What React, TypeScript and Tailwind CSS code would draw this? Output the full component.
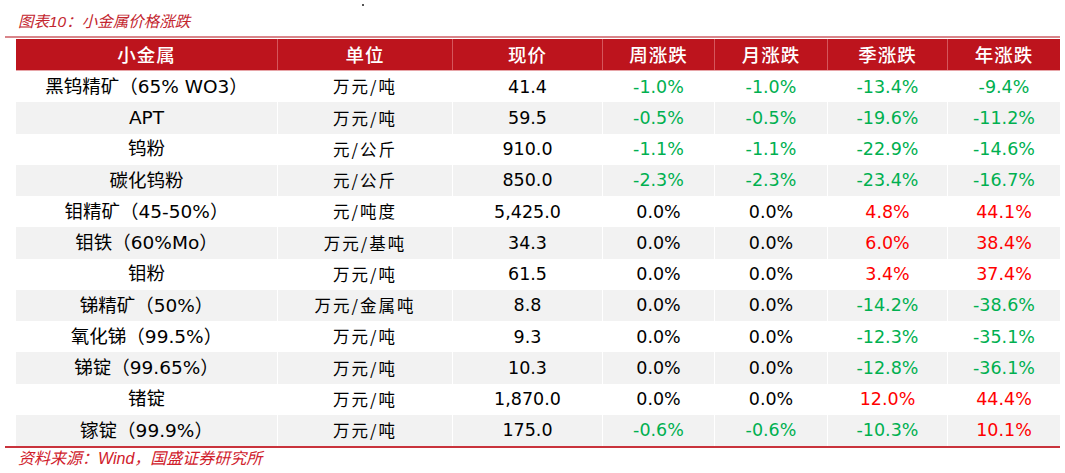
type Row = {
  name: string
  unit: string
  price: string
  week: string
  month: string
  quarter: string
  year: string
}

const rows: Row[] = [
  { name: "黑钨精矿（65% WO3）", unit: "万元/吨", price: "41.4", week: "-1.0%", month: "-1.0%", quarter: "-13.4%", year: "-9.4%" },
  { name: "APT", unit: "万元/吨", price: "59.5", week: "-0.5%", month: "-0.5%", quarter: "-19.6%", year: "-11.2%" },
  { name: "钨粉", unit: "元/公斤", price: "910.0", week: "-1.1%", month: "-1.1%", quarter: "-22.9%", year: "-14.6%" },
  { name: "碳化钨粉", unit: "元/公斤", price: "850.0", week: "-2.3%", month: "-2.3%", quarter: "-23.4%", year: "-16.7%" },
  { name: "钼精矿（45-50%）", unit: "元/吨度", price: "5,425.0", week: "0.0%", month: "0.0%", quarter: "4.8%", year: "44.1%" },
  { name: "钼铁（60%Mo）", unit: "万元/基吨", price: "34.3", week: "0.0%", month: "0.0%", quarter: "6.0%", year: "38.4%" },
  { name: "钼粉", unit: "万元/吨", price: "61.5", week: "0.0%", month: "0.0%", quarter: "3.4%", year: "37.4%" },
  { name: "锑精矿（50%）", unit: "万元/金属吨", price: "8.8", week: "0.0%", month: "0.0%", quarter: "-14.2%", year: "-38.6%" },
  { name: "氧化锑（99.5%）", unit: "万元/吨", price: "9.3", week: "0.0%", month: "0.0%", quarter: "-12.3%", year: "-35.1%" },
  { name: "锑锭（99.65%）", unit: "万元/吨", price: "10.3", week: "0.0%", month: "0.0%", quarter: "-12.8%", year: "-36.1%" },
  { name: "锗锭", unit: "万元/吨", price: "1,870.0", week: "0.0%", month: "0.0%", quarter: "12.0%", year: "44.4%" },
  { name: "镓锭（99.9%）", unit: "万元/吨", price: "175.0", week: "-0.6%", month: "-0.6%", quarter: "-10.3%", year: "10.1%" },
]

const headers = ["小金属", "单位", "现价", "周涨跌", "月涨跌", "季涨跌", "年涨跌"]
const widths = ["w-[261px]", "w-[175px]", "w-[150px]", "w-[112px]", "w-[113px]", "w-[120px]", "w-[113px]"]

// green for drops, red for rises, black for flat
function changeColor(v: string) {
  if (v.startsWith("-")) return "text-[#00b050]"
  if (v === "0.0%") return "text-black"
  return "text-[#ff0000]"
}

export default function App() {
  return (
    <div className="relative w-[1065px] h-[473px] bg-white overflow-hidden">
      <div className="absolute left-[362px] top-[4px] w-[2px] h-[2px] bg-[#555]" />

      <div className="h-[36px] pl-[18px] pt-[12px] text-[15.5px] leading-[20px] italic text-[#c3262f] font-['Liberation_Sans','Noto_Sans_CJK_SC',sans-serif]">
        图表10：小金属价格涨跌
      </div>
      <div className="ml-[5px] w-[1055px] h-[2px] bg-[#d9858a]" />
      <div className="h-[1px]" />

      <div className="ml-[16px] w-[1044px]">
        <div className="flex h-[32px] bg-[#bd141d] border-b border-[#e7a5a8]">
          {headers.map((h, i) => (
            <div
              key={h}
              className={`${widths[i]} flex items-center justify-center text-white text-[18.5px] tracking-[1px] font-medium font-['Noto_Sans_CJK_SC',sans-serif] ${i > 0 ? "border-l border-[#d5565c]" : ""}`}
            >
              {h}
            </div>
          ))}
        </div>

        {rows.map((r, idx) => {
          const cells = [r.name, r.unit, r.price, r.week, r.month, r.quarter, r.year]
          return (
            <div key={r.name} className={`flex h-[31.25px] ${idx % 2 === 1 ? "bg-[#f2f2f2]" : "bg-white"}`}>
              {cells.map((c, i) => {
                let color = "text-black"
                if (i >= 3) color = changeColor(c)
                let font = "font-['DejaVu_Sans','Noto_Sans_CJK_SC',sans-serif] text-[17.5px]"
                if (i === 0) font = "font-['DejaVu_Sans','Noto_Sans_CJK_SC',sans-serif] text-[18.5px]"
                if (i === 1) font = "font-['Noto_Sans_CJK_SC',sans-serif] tracking-[2px] text-[16.5px]"
                return (
                  <div
                    key={i}
                    className={`${widths[i]} flex items-center justify-center whitespace-nowrap ${font} ${color} ${i > 0 ? "border-l border-white" : ""}`}
                  >
                    {c}
                  </div>
                )
              })}
            </div>
          )
        })}
      </div>

      <div className="ml-[5px] w-[1055px] h-[2px] bg-[#c9333c]" />
      <div className="pl-[18px] pt-[1px] text-[16px] leading-[20px] italic text-[#d0202b] font-['Liberation_Sans','Noto_Sans_CJK_SC',sans-serif]">
        资料来源：Wind，国盛证券研究所
      </div>
    </div>
  )
}
